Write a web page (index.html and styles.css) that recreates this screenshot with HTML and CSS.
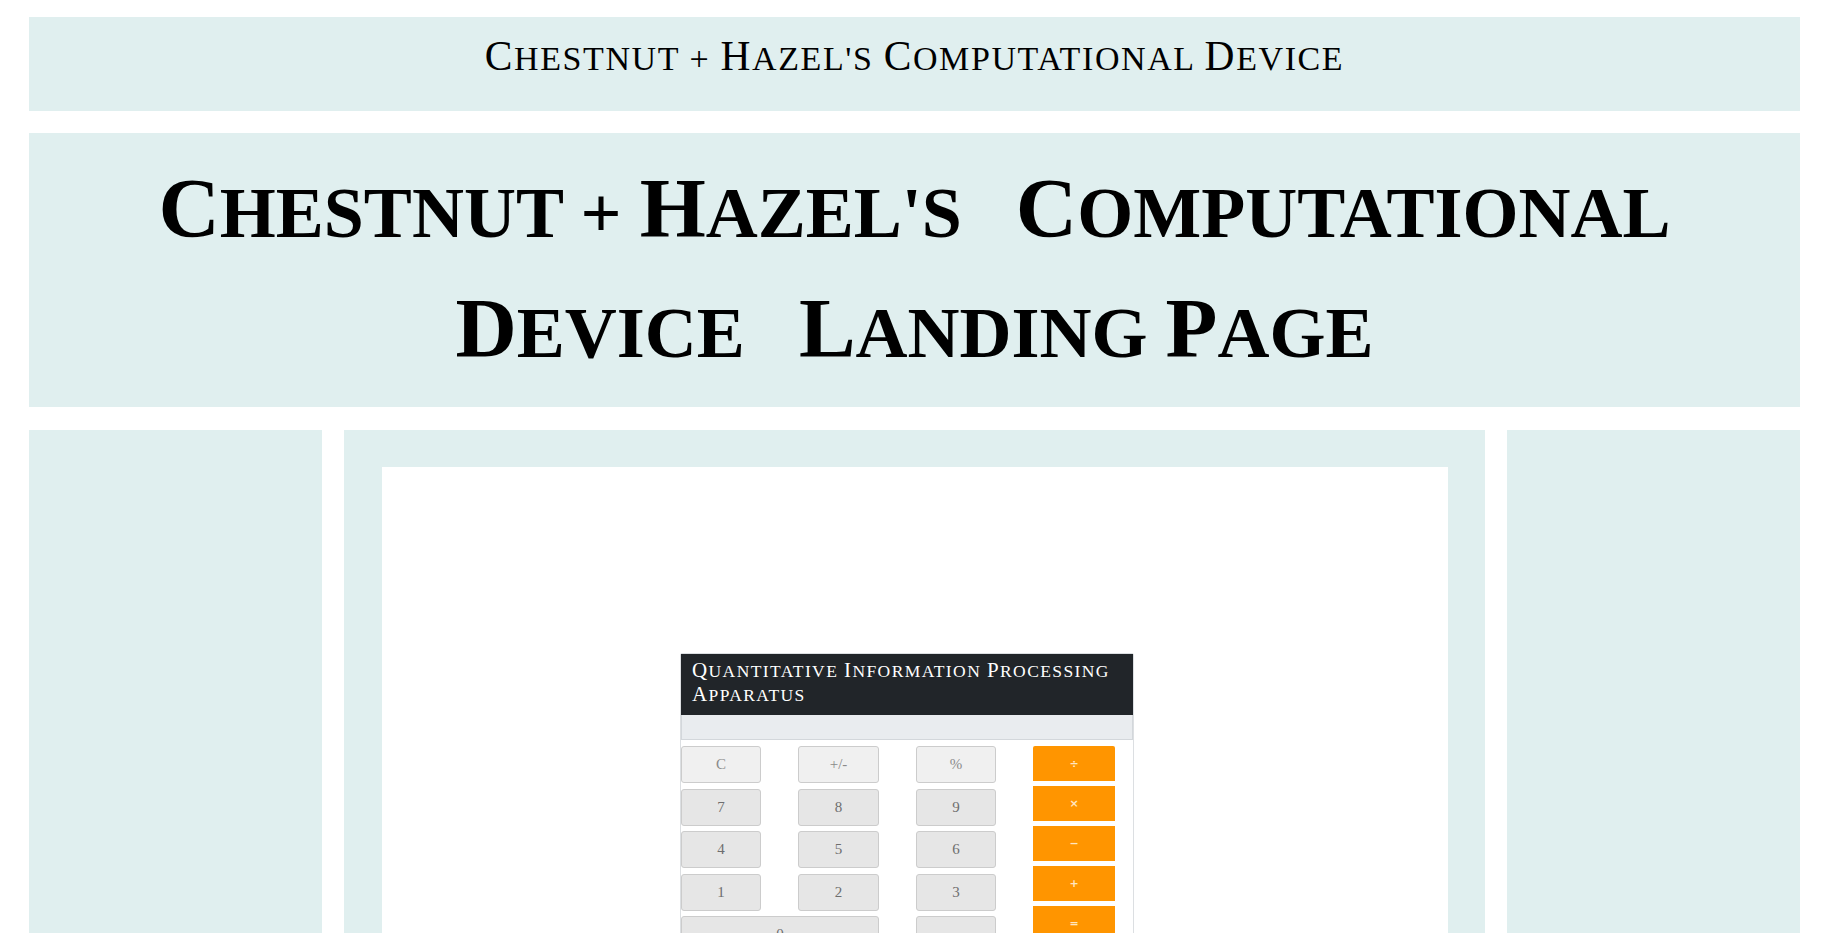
FILE: index.html
```html
<!DOCTYPE html>
<html lang="en">
<head>
<meta charset="utf-8">
<title>Chestnut + Hazel's Computational Device</title>
<link rel="stylesheet" href="styles.css">
</head>
<body>
<div class="page">
  <header class="topbar">
    <div class="brand caps"><span class="ini">C</span>hestnut + <span class="ini">H</span>azel's <span class="ini">C</span>omputational <span class="ini">D</span>evice</div>
  </header>
  <section class="hero">
    <h1 class="hero-title caps"><span class="ini">C</span>hestnut + <span class="ini">H</span>azel's&nbsp;&nbsp; <span class="ini">C</span>omputational<br><span class="ini">D</span>evice&nbsp;&nbsp; <span class="ini">L</span>anding <span class="ini">P</span>age</h1>
  </section>
  <main class="row">
    <aside class="side"></aside>
    <div class="center">
      <div class="panel">
        <div class="calc">
          <div class="calc-head caps"><span class="ini">Q</span>uantitative <span class="ini">I</span>nformation <span class="ini">P</span>rocessing <span class="ini">A</span>pparatus</div>
          <div class="calc-display"></div>
          <div class="keypad">
            <div class="keys">
              <button class="key key-fn">C</button>
              <button class="key key-fn">+/-</button>
              <button class="key key-fn">%</button>
              <button class="key">7</button>
              <button class="key">8</button>
              <button class="key">9</button>
              <button class="key">4</button>
              <button class="key">5</button>
              <button class="key">6</button>
              <button class="key">1</button>
              <button class="key">2</button>
              <button class="key">3</button>
              <button class="key key-wide">0</button>
              <button class="key">.</button>
            </div>
            <div class="ops">
              <button class="op op-first">÷</button>
              <button class="op">×</button>
              <button class="op">−</button>
              <button class="op">+</button>
              <button class="op">=</button>
            </div>
          </div>
        </div>
      </div>
    </div>
    <aside class="side"></aside>
  </main>
</div>
</body>
</html>
```

FILE: styles.css
```css
html, body {
  margin: 0;
  padding: 0;
  background: #ffffff;
  overflow: hidden;
}

.page {
  padding: 17px 47px 0 29px;
  display: flex;
  flex-direction: column;
  gap: 22px;
}

.caps {
  font-family: "Liberation Serif", "Times New Roman", serif;
  text-transform: uppercase;
}

.ini {
  font-size: 1.22em;
  line-height: 0;
}

.topbar {
  background: #e0efef;
  height: 94px;
  display: flex;
  align-items: center;
  justify-content: center;
}

.brand {
  font-size: 34px;
  line-height: 40px;
  color: #000;
  letter-spacing: 1.6px;
  padding-bottom: 10px;
}

.hero {
  background: #e0efef;
  height: 274px;
  display: flex;
  align-items: center;
  justify-content: center;
}

.hero-title {
  margin: 0;
  font-weight: 700;
  font-size: 72px;
  line-height: 120px;
  text-align: center;
  color: #000;
  letter-spacing: 0;
  padding-top: 5px;
}

.hero-title .ini {
  font-size: 1.18em;
}

.row {
  margin-top: 1px;
  display: grid;
  grid-template-columns: 293px 1141px 293px;
  column-gap: 22px;
  height: 720px;
}

.side {
  background: #e0efef;
}

.center {
  background: #e0efef;
  padding: 37px 37px 0 38px;
}

.panel {
  background: #ffffff;
  height: 100%;
  padding: 186px 0 0 298px;
  box-sizing: border-box;
}

.calc {
  width: 454px;
  box-sizing: border-box;
  border: 1px solid #dcdfe2;
  border-radius: 2px 2px 0 0;
}

.calc-head {
  background: #212529;
  color: #ffffff;
  font-size: 17.5px;
  line-height: 24px;
  letter-spacing: 1.4px;
  padding: 5px 12px 6px 11px;
  height: 61px;
  box-sizing: border-box;
}

.calc-head .ini {
  font-size: 1.2em;
}

.calc-display {
  background: #e9ecef;
  height: 25px;
  box-sizing: border-box;
  border: 1px solid #d3d7db;
  border-top: none;
}

.keypad {
  display: flex;
  gap: 37px;
  padding-top: 6px;
}

.keys {
  display: grid;
  grid-template-columns: 80px 81px 80px;
  grid-auto-rows: 37px;
  column-gap: 37px;
  row-gap: 5.5px;
}

.key {
  margin: 0;
  border: 1px solid #cccccc;
  border-radius: 3px;
  background: #e6e6e6;
  color: #6e6e6e;
  font-family: "Liberation Serif", "Times New Roman", serif;
  font-size: 15px;
  padding: 0;
}

.key-fn {
  background: #f0f0f0;
  color: #8a8a8a;
}

.key-wide {
  grid-column: span 2;
}

.ops {
  display: flex;
  flex-direction: column;
  gap: 5px;
  width: 82px;
}

.op {
  margin: 0;
  height: 35px;
  border: none;
  padding: 0;
  background: #ff9500;
  color: #ffe6c2;
  font-family: "DejaVu Sans", sans-serif;
  font-size: 11px;
  font-weight: 700;
}

.op-first {
  border-radius: 2px 2px 0 0;
}
```
